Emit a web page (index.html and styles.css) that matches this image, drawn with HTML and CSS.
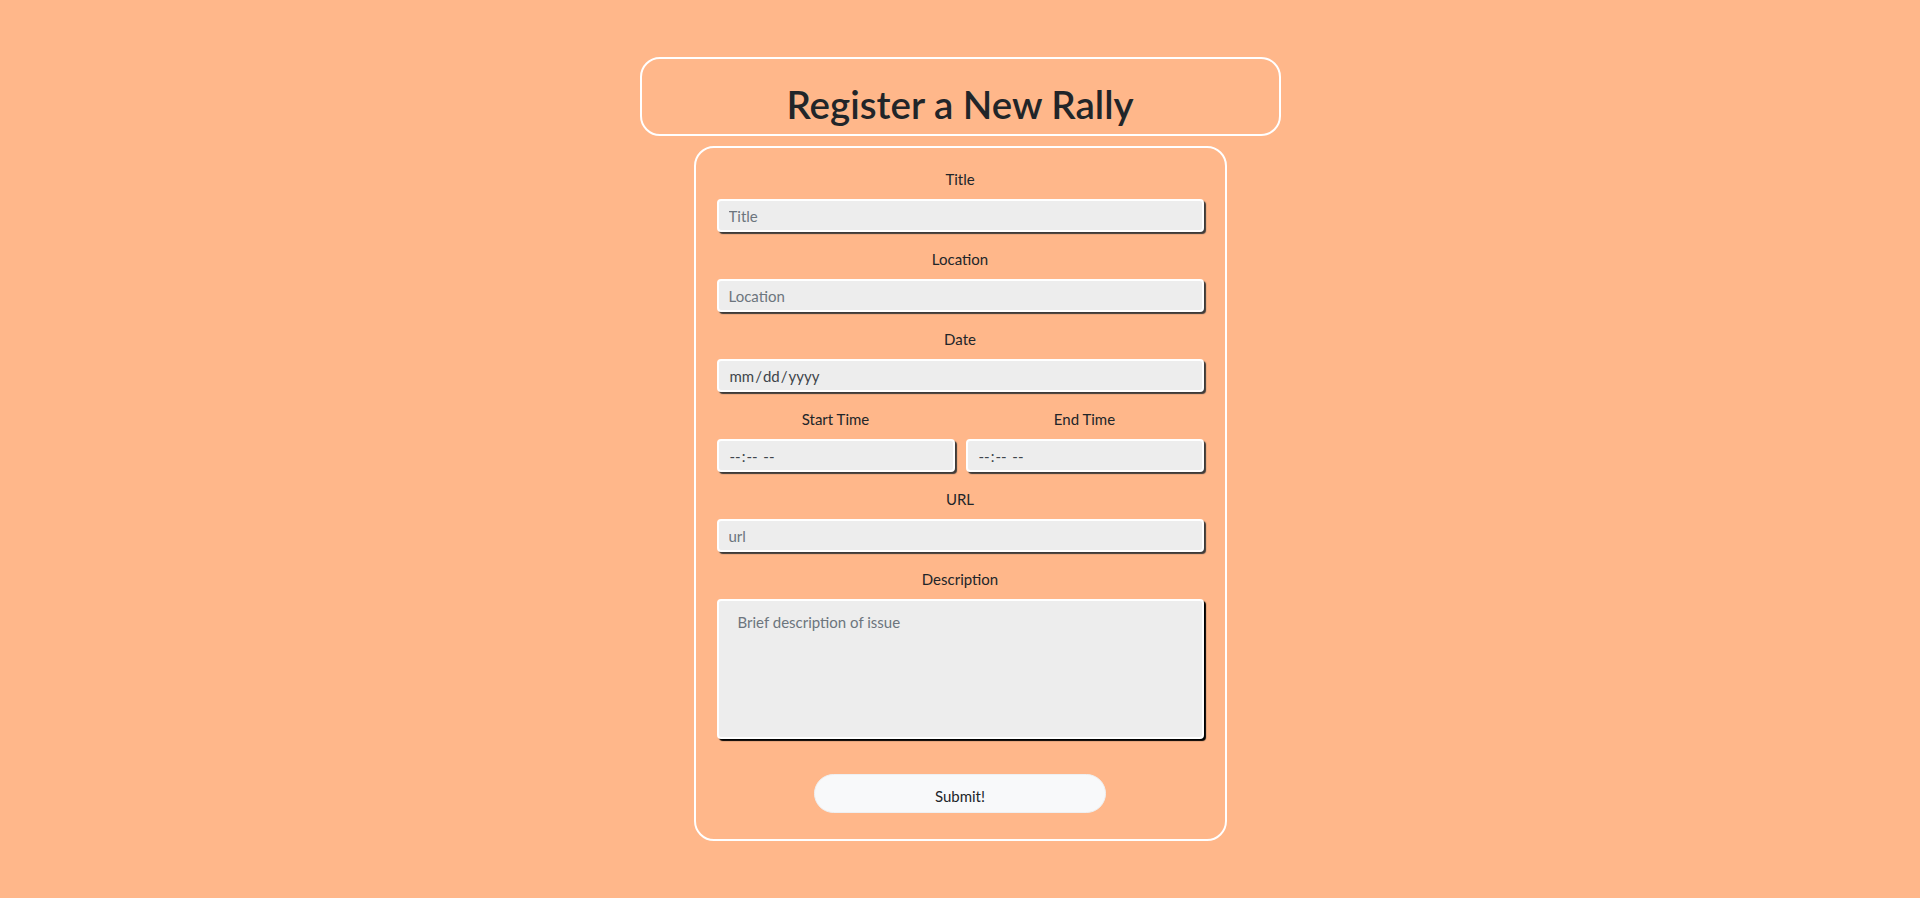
FILE: index.html
```html
<!DOCTYPE html>
<html lang="en">
<head>
<meta charset="utf-8">
<title>Register a New Rally</title>
<link rel="stylesheet" href="styles.css">
</head>
<body>
<main class="page">
  <header class="title-box">
    <h1 class="title">Register a New Rally</h1>
  </header>
  <form class="card">
    <div class="field">
      <label class="label" for="title">Title</label>
      <input class="control" id="title" type="text" placeholder="Title">
    </div>
    <div class="field">
      <label class="label" for="location">Location</label>
      <input class="control" id="location" type="text" placeholder="Location">
    </div>
    <div class="field">
      <label class="label" for="date">Date</label>
      <input class="control" id="date" type="date">
    </div>
    <div class="row">
      <div class="field">
        <label class="label" for="start">Start Time</label>
        <input class="control" id="start" type="time">
      </div>
      <div class="field">
        <label class="label" for="end">End Time</label>
        <input class="control" id="end" type="time">
      </div>
    </div>
    <div class="field">
      <label class="label" for="url">URL</label>
      <input class="control" id="url" type="text" placeholder="url">
    </div>
    <div class="field">
      <label class="label" for="desc">Description</label>
      <textarea class="control area" id="desc" placeholder="Brief description of issue"></textarea>
    </div>
    <div class="actions">
      <button class="submit" type="button">Submit!</button>
    </div>
  </form>
</main>
</body>
</html>
```
FILE: styles.css
```css
* { box-sizing: border-box; }

html, body {
  margin: 0;
  padding: 0;
  background: #ffb78a;
}

body {
  font-family: Lato, "Open Sans", "Liberation Sans", sans-serif;
  color: #212529;
  font-size: 16px;
  line-height: 24px;
}

.page {
  display: flex;
  flex-direction: column;
  align-items: center;
  padding-top: 57px;
}

.title-box {
  width: 641px;
  height: 79px;
  border: 2px solid #ffffff;
  border-radius: 20px;
  padding-top: 21px;
}

.title {
  margin: 0;
  text-align: center;
  font-size: 38.5px;
  line-height: 48px;
  font-weight: 600;
  color: #212529;
}

.card {
  margin-top: 10px;
  width: 533px;
  height: 695px;
  border: 2px solid #ffffff;
  border-radius: 20px;
  padding: 19px 21px 25px 21px;
  display: flex;
  flex-direction: column;
}

.field {
  display: flex;
  flex-direction: column;
  margin-bottom: 15px;
  min-width: 0;
}

.row {
  display: grid;
  grid-template-columns: 1fr 1fr;
  column-gap: 11px;
}

.label {
  text-align: center;
  margin-bottom: 8px;
  line-height: 24px;
  font-size: 15px;
  color: #212529;
}

.control {
  display: block;
  width: 100%;
  height: 33px;
  margin: 0;
  padding: 0 10px;
  border: 2px solid #ffffff;
  border-radius: 4px;
  background: #ededed;
  font-family: Lato, "Open Sans", "Liberation Sans", sans-serif;
  font-size: 15px;
  color: #3f454b;
  box-shadow: 2px 2px 1px rgba(40, 44, 48, 0.9);
  outline: none;
}

.control::placeholder {
  color: #6c757d;
}

.control::-webkit-calendar-picker-indicator {
  display: none;
}

.area {
  height: 140px;
  padding: 9px 19px;
  line-height: 24px;
  resize: none;
  box-shadow: 2px 2px 1px #000000;
}

.actions {
  display: flex;
  justify-content: center;
  margin-top: 20px;
}

.submit {
  width: 292px;
  height: 39px;
  padding: 8px 0 3px;
  border: 1px solid #eef0f2;
  border-radius: 20px;
  background: #f8f9fa;
  font-family: Lato, "Open Sans", "Liberation Sans", sans-serif;
  font-size: 15px;
  line-height: 24px;
  color: #212529;
}
```
